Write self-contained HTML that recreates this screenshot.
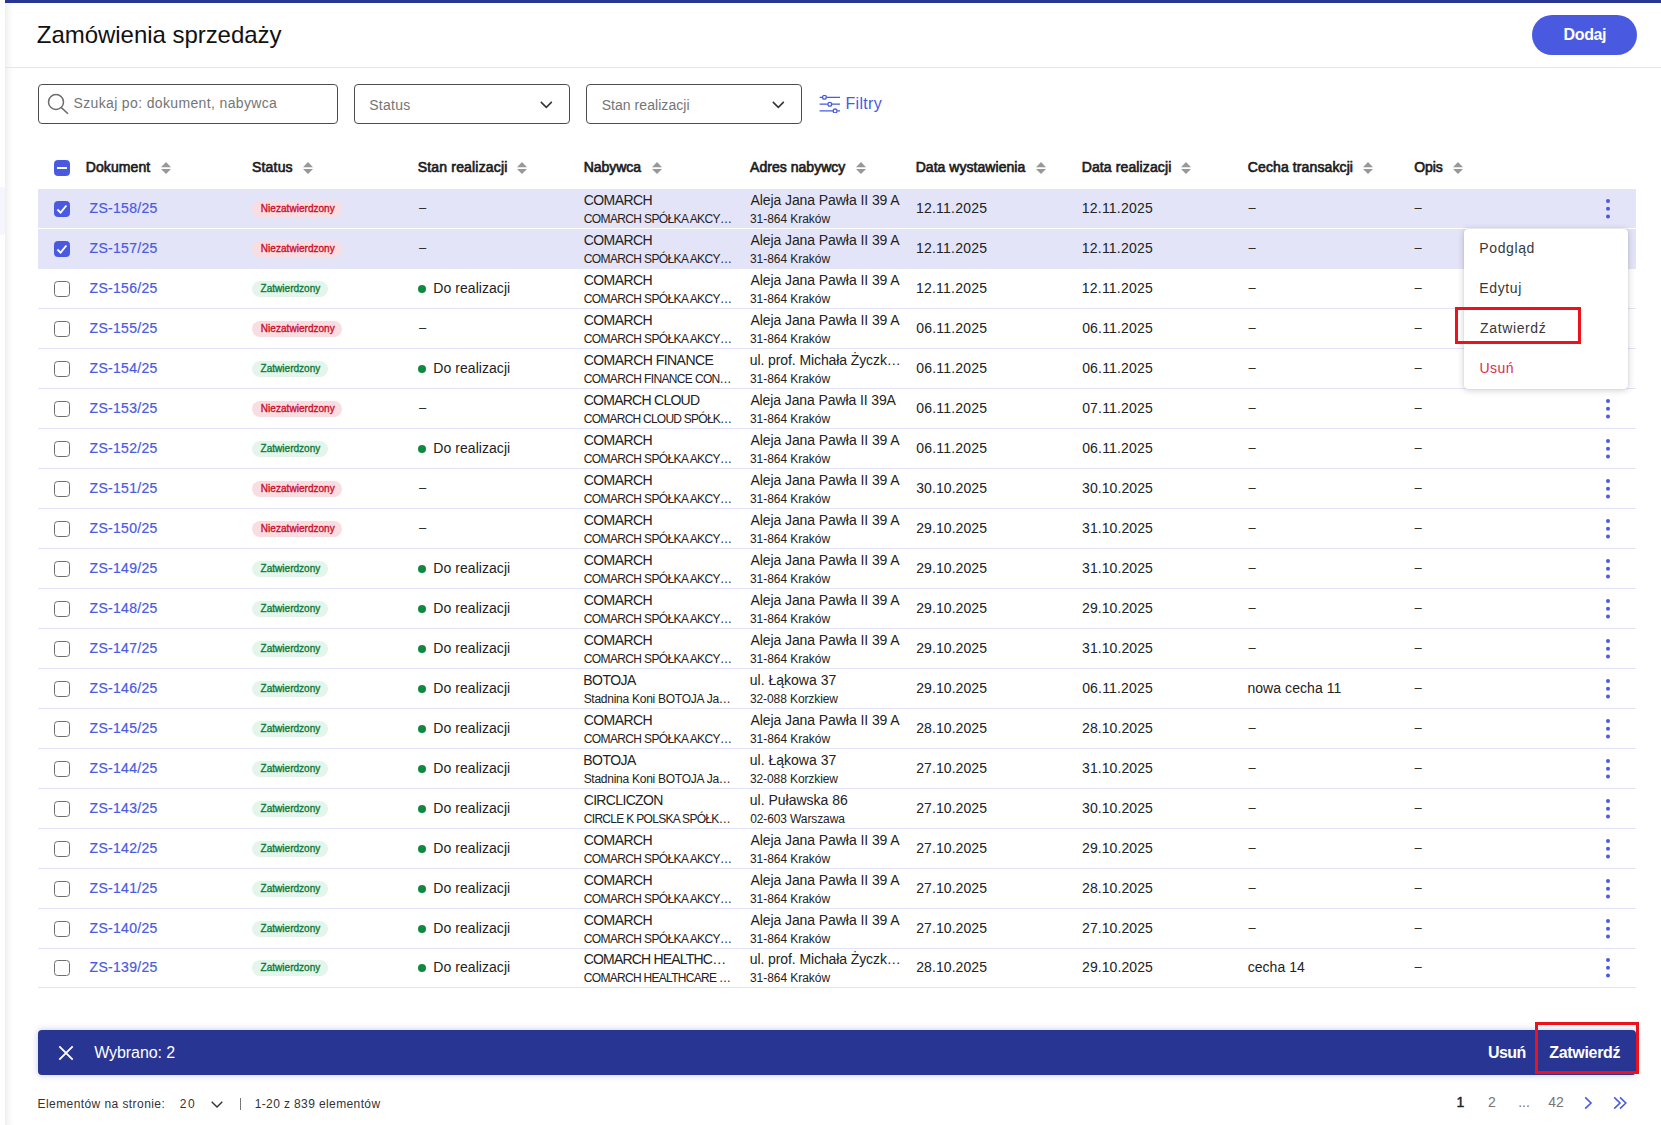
<!DOCTYPE html>
<html lang="pl">
<head>
<meta charset="utf-8">
<title>Zamówienia sprzedaży</title>
<style>
*{box-sizing:border-box;margin:0;padding:0}
html,body{width:1661px;height:1125px;overflow:hidden;background:#fff}
body{position:relative;font-family:"Liberation Sans",sans-serif;color:#222;font-size:14px}
span,a,i,svg{white-space:nowrap}
.edge{position:absolute;left:5px;top:0;width:9px;height:1125px;background:linear-gradient(90deg,#efefef 0,#f8f8f8 40%,#fff 100%)}
.topbar{position:absolute;left:5px;top:0;right:0;height:3px;background:#283593}
.title{position:absolute;top:21px;font-size:24px;line-height:28px;color:#111}
.add{position:absolute;left:1532px;top:15px;width:105px;height:40px;border-radius:20px;background:#4a5ae0;color:#fff;font-weight:bold;font-size:16px}
.add span{position:absolute;top:10px;line-height:20px}
.hline{position:absolute;left:5px;right:0;top:67px;height:1px;background:#e3e3fa}
.search{position:absolute;left:38px;top:84px;width:300px;height:40px;border:1px solid #4d4d4d;border-radius:4px}
.sico{position:absolute;left:7px;top:7px;fill:none;stroke:#6b6b6b;stroke-width:1.5}
.ph{position:absolute;top:9px;line-height:18px;font-size:14px;color:#757575}
.sel{position:absolute;top:84px;width:216px;height:40px;border:1px solid #4d4d4d;border-radius:4px}
.sel1{left:354px}.sel2{left:586px}
.sl{position:absolute;top:11px;line-height:18px;font-size:14px;color:#757575}
.chev{position:absolute;left:185px;top:16px;fill:none;stroke:#333;stroke-width:1.5}
.filt{position:absolute;left:819px;top:94px;height:20px;color:#4a5ae0;font-size:16px}
.filt svg{position:absolute;left:0;top:1px;fill:none;stroke:#4a5ae0;stroke-width:1.3}
.filt span{position:absolute;top:0px;line-height:20px}
.thead{position:absolute;left:38px;top:149px;width:1598px;height:40px}
.th{position:absolute;top:9px;line-height:18px;font-size:14px;color:#1c1c1c;-webkit-text-stroke:.65px #1c1c1c}
.srt{position:absolute;top:12.5px;fill:#989898}
.cb{position:absolute;left:16px;top:12px;width:16px;height:16px;border:1px solid #6e6e6e;border-radius:3.5px;background:#fff}
.thead .cb{top:11px}
.cb.chk,.cb.ind{background:#4a5ae0;border-color:#4a5ae0}
.cb.chk svg{position:absolute;left:-1px;top:-1px;fill:none;stroke:#fff;stroke-width:1.9}
.cb.ind i{position:absolute;left:2px;top:5.5px;width:10px;height:2.5px;background:#fff}
.tbody{position:absolute;left:38px;top:189px;width:1598px}
.tr{position:relative;height:40px;border-bottom:1px solid #e3e3fa}
.tr.on{background:#e4e4f8}
.tr.rs1{border-bottom-color:#fff}
.tr.rs2{border-bottom-color:#e4e4f8}
.tr.last{height:39px}
.tr>*{position:absolute}
.tr.last>*{margin-top:-1px}
.doc{top:10px;line-height:18px;font-size:14px;color:#4a5ae0;-webkit-text-stroke:.2px #4a5ae0}
.bdg{left:214px;top:12px;height:16px;border-radius:8px;font-size:10px;-webkit-text-stroke:.35px}
.bdg span{position:absolute;top:0;line-height:16px}
.bn{width:90px;background:#f9dde1;color:#c8102e}
.bz{width:76px;background:#e4f5eb;color:#0e7a3c}
.one{top:10px;line-height:18px}
.dot{left:380px;top:16px;width:8px;height:8px;border-radius:50%;background:#0e8a3e}
.l1{top:2px;line-height:18px;font-size:14px}
.l2{top:22px;line-height:16px;font-size:12px}
.kb{left:1567px;top:9px;fill:#4a5ae0}
.menu{position:absolute;left:1464px;top:229px;width:164px;height:160px;background:#fff;border-radius:4px;box-shadow:0 1px 7px rgba(0,0,0,.20),0 0 2px rgba(0,0,0,.10)}
.mi{position:relative;height:40px;font-size:14px;color:#383838}
.mi span{position:absolute;top:10px;line-height:18px}
.mi.del{color:#dc2d4b}
.red{position:absolute;border:3px solid #ec111a}
.r1{left:1455px;top:307px;width:126px;height:37px}
.r2{left:1535px;top:1022px;width:104px;height:52px}
.bar{position:absolute;left:38px;top:1030px;width:1598px;height:45px;background:#283593;border-radius:4px;color:#fff;box-shadow:0 0 7px rgba(60,70,200,.30)}
.bar .x{position:absolute;left:20px;top:15px;fill:none;stroke:#fff;stroke-width:1.9}
.bar span{position:absolute;top:13px;line-height:20px;font-size:16px}
.bar .b{font-weight:bold}
.pg{position:absolute;left:0;top:1093px;width:1661px;height:20px;font-size:12px;color:#333}
.pg>*{position:absolute;line-height:20px;top:1px}
.bar2{left:240px;top:5px!important;width:1px;height:12px;background:#777}
.pchev{left:211px;top:8px!important;fill:none;stroke:#333;stroke-width:1.4}
.n{font-size:14px;width:32px;text-align:center;color:#757575;top:-1px!important}
.n1{left:1444.5px;color:#222;-webkit-text-stroke:0.45px #222}.n2{left:1476px}.n3{left:1508px}.n4{left:1540px}
.nx{left:1584px;top:3px!important;fill:none;stroke:#4a5ae0;stroke-width:1.6}
.nxx{left:1613px;top:3px!important;fill:none;stroke:#4a5ae0;stroke-width:1.6}
.dash{top:10px;font-size:13px}
.side{position:absolute;left:0;top:187px;width:4.5px;height:48px;background:#f5f5fd;border-radius:0 3px 3px 0}

</style>
</head>
<body>
<div class="side"></div>
<div class="edge"></div>
<div class="topbar"></div>
<span class="title" style="left:36.87px;letter-spacing:-0.043px">Zamówienia sprzedaży</span>
<div class="add"><span style="left:31.60px;letter-spacing:-0.397px">Dodaj</span></div>
<div class="hline"></div>
<div class="search"><svg class="sico" width="24" height="24" viewBox="0 0 24 24"><circle cx="10" cy="10" r="7.5"/><path d="M15.4 15.6 L22 21.7"/></svg><span class="ph" style="left:34.46px;letter-spacing:0.358px">Szukaj po: dokument, nabywca</span></div>
<div class="sel sel1"><span class="sl" style="left:14.16px;letter-spacing:0.294px">Status</span><svg class="chev" width="14" height="8" viewBox="0 0 14 8"><path d="M0.8 0.9 L6.3 6.4 L11.8 0.9"/></svg></div>
<div class="sel sel2"><span class="sl" style="left:14.66px;letter-spacing:0.054px">Stan realizacji</span><svg class="chev" width="14" height="8" viewBox="0 0 14 8"><path d="M0.8 0.9 L6.3 6.4 L11.8 0.9"/></svg></div>
<div class="filt"><svg width="22" height="18" viewBox="0 0 22 18"><path d="M0.6 2.3 H3.2 M7.6 2.3 H21 M0.6 9.2 H8.6 M13 9.2 H21 M0.6 15.9 H13.9 M18.3 15.9 H21"/><circle cx="5.4" cy="2.3" r="1.9"/><circle cx="10.8" cy="9.2" r="1.9"/><circle cx="16.1" cy="15.9" r="1.9"/></svg><span style="left:26.54px;letter-spacing:0.311px">Filtry</span></div>
<div class="thead">
<span class="cb ind"><i></i></span>
<span class="th" style="left:47.67px;letter-spacing:0.110px">Dokument</span><svg class="srt" width="10" height="12" viewBox="0 0 10 12" style="left:123.10px"><path d="M5 0 L10 5.2 H0 Z"/><path d="M5 12 L10 6.9 H0 Z"/></svg>
<span class="th" style="left:213.96px;letter-spacing:0.194px">Status</span><svg class="srt" width="10" height="12" viewBox="0 0 10 12" style="left:265.10px"><path d="M5 0 L10 5.2 H0 Z"/><path d="M5 12 L10 6.9 H0 Z"/></svg>
<span class="th" style="left:379.71px;letter-spacing:0.179px">Stan realizacji</span><svg class="srt" width="10" height="12" viewBox="0 0 10 12" style="left:479.35px"><path d="M5 0 L10 5.2 H0 Z"/><path d="M5 12 L10 6.9 H0 Z"/></svg>
<span class="th" style="left:545.67px;letter-spacing:-0.039px">Nabywca</span><svg class="srt" width="10" height="12" viewBox="0 0 10 12" style="left:613.85px"><path d="M5 0 L10 5.2 H0 Z"/><path d="M5 12 L10 6.9 H0 Z"/></svg>
<span class="th" style="left:712.08px;letter-spacing:0.026px">Adres nabywcy</span><svg class="srt" width="10" height="12" viewBox="0 0 10 12" style="left:818.10px"><path d="M5 0 L10 5.2 H0 Z"/><path d="M5 12 L10 6.9 H0 Z"/></svg>
<span class="th" style="left:877.67px;letter-spacing:0.045px">Data wystawienia</span><svg class="srt" width="10" height="12" viewBox="0 0 10 12" style="left:998.35px"><path d="M5 0 L10 5.2 H0 Z"/><path d="M5 12 L10 6.9 H0 Z"/></svg>
<span class="th" style="left:1043.67px;letter-spacing:0.123px">Data realizacji</span><svg class="srt" width="10" height="12" viewBox="0 0 10 12" style="left:1143.35px"><path d="M5 0 L10 5.2 H0 Z"/><path d="M5 12 L10 6.9 H0 Z"/></svg>
<span class="th" style="left:1209.84px;letter-spacing:0.110px">Cecha transakcji</span><svg class="srt" width="10" height="12" viewBox="0 0 10 12" style="left:1325.10px"><path d="M5 0 L10 5.2 H0 Z"/><path d="M5 12 L10 6.9 H0 Z"/></svg>
<span class="th" style="left:1376.15px;letter-spacing:-0.074px">Opis</span><svg class="srt" width="10" height="12" viewBox="0 0 10 12" style="left:1415.10px"><path d="M5 0 L10 5.2 H0 Z"/><path d="M5 12 L10 6.9 H0 Z"/></svg>
</div>
<div class="tbody">
<div class="tr on rs1"><span class="cb chk"><svg width="16" height="16" viewBox="0 0 16 16"><path d="M3.4 8.5 L6.6 11.6 L12.4 4.5"/></svg></span><a class="doc" style="left:51.60px;letter-spacing:0.291px">ZS-158/25</a><span class="bdg bn"><span style="left:8.84px;letter-spacing:0.037px">Niezatwierdzony</span></span><span class="one dash" style="left:381px">–</span><span class="l1" style="left:545.69px;letter-spacing:-0.571px">COMARCH</span><span class="l2" style="left:545.79px;letter-spacing:-0.627px">COMARCH SPÓŁKA AKCY…</span><span class="l1" style="left:712.38px;letter-spacing:-0.072px">Aleja Jana Pawła II 39 A</span><span class="l2" style="left:711.96px;letter-spacing:-0.047px">31-864 Kraków</span><span class="one" style="left:878px;letter-spacing:0.214px">12.11.2025</span><span class="one" style="left:1043.80px;letter-spacing:0.214px">12.11.2025</span><span class="one dash" style="left:1210.5px">–</span><span class="one dash" style="left:1376.6px">–</span><svg class="kb" width="6" height="22" viewBox="0 0 6 22"><circle cx="3" cy="3" r="2"/><circle cx="3" cy="10.8" r="2"/><circle cx="3" cy="18.6" r="2"/></svg></div>
<div class="tr on rs2"><span class="cb chk"><svg width="16" height="16" viewBox="0 0 16 16"><path d="M3.4 8.5 L6.6 11.6 L12.4 4.5"/></svg></span><a class="doc" style="left:51.60px;letter-spacing:0.291px">ZS-157/25</a><span class="bdg bn"><span style="left:8.84px;letter-spacing:0.037px">Niezatwierdzony</span></span><span class="one dash" style="left:381px">–</span><span class="l1" style="left:545.69px;letter-spacing:-0.571px">COMARCH</span><span class="l2" style="left:545.79px;letter-spacing:-0.627px">COMARCH SPÓŁKA AKCY…</span><span class="l1" style="left:712.38px;letter-spacing:-0.072px">Aleja Jana Pawła II 39 A</span><span class="l2" style="left:711.96px;letter-spacing:-0.047px">31-864 Kraków</span><span class="one" style="left:878px;letter-spacing:0.214px">12.11.2025</span><span class="one" style="left:1043.80px;letter-spacing:0.214px">12.11.2025</span><span class="one dash" style="left:1210.5px">–</span><span class="one dash" style="left:1376.6px">–</span></div>
<div class="tr"><span class="cb"></span><a class="doc" style="left:51.60px;letter-spacing:0.291px">ZS-156/25</a><span class="bdg bz"><span style="left:8.60px;letter-spacing:0.014px">Zatwierdzony</span></span><i class="dot"></i><span class="one" style="left:395.37px;letter-spacing:0.046px">Do realizacji</span><span class="l1" style="left:545.69px;letter-spacing:-0.571px">COMARCH</span><span class="l2" style="left:545.79px;letter-spacing:-0.627px">COMARCH SPÓŁKA AKCY…</span><span class="l1" style="left:712.38px;letter-spacing:-0.072px">Aleja Jana Pawła II 39 A</span><span class="l2" style="left:711.96px;letter-spacing:-0.047px">31-864 Kraków</span><span class="one" style="left:878px;letter-spacing:0.214px">12.11.2025</span><span class="one" style="left:1043.80px;letter-spacing:0.214px">12.11.2025</span><span class="one dash" style="left:1210.5px">–</span><span class="one dash" style="left:1376.6px">–</span></div>
<div class="tr"><span class="cb"></span><a class="doc" style="left:51.60px;letter-spacing:0.291px">ZS-155/25</a><span class="bdg bn"><span style="left:8.84px;letter-spacing:0.037px">Niezatwierdzony</span></span><span class="one dash" style="left:381px">–</span><span class="l1" style="left:545.69px;letter-spacing:-0.571px">COMARCH</span><span class="l2" style="left:545.79px;letter-spacing:-0.627px">COMARCH SPÓŁKA AKCY…</span><span class="l1" style="left:712.38px;letter-spacing:-0.072px">Aleja Jana Pawła II 39 A</span><span class="l2" style="left:711.96px;letter-spacing:-0.047px">31-864 Kraków</span><span class="one" style="left:878.36px;letter-spacing:0.174px">06.11.2025</span><span class="one" style="left:1044.16px;letter-spacing:0.174px">06.11.2025</span><span class="one dash" style="left:1210.5px">–</span><span class="one dash" style="left:1376.6px">–</span></div>
<div class="tr"><span class="cb"></span><a class="doc" style="left:51.60px;letter-spacing:0.291px">ZS-154/25</a><span class="bdg bz"><span style="left:8.60px;letter-spacing:0.014px">Zatwierdzony</span></span><i class="dot"></i><span class="one" style="left:395.37px;letter-spacing:0.046px">Do realizacji</span><span class="l1" style="left:545.69px;letter-spacing:-0.534px">COMARCH FINANCE</span><span class="l2" style="left:545.79px;letter-spacing:-0.640px">COMARCH FINANCE CON…</span><span class="l1" style="left:711.79px;letter-spacing:-0.096px">ul. prof. Michała Życzk…</span><span class="l2" style="left:711.96px;letter-spacing:-0.047px">31-864 Kraków</span><span class="one" style="left:878.36px;letter-spacing:0.174px">06.11.2025</span><span class="one" style="left:1044.16px;letter-spacing:0.174px">06.11.2025</span><span class="one dash" style="left:1210.5px">–</span><span class="one dash" style="left:1376.6px">–</span></div>
<div class="tr"><span class="cb"></span><a class="doc" style="left:51.60px;letter-spacing:0.291px">ZS-153/25</a><span class="bdg bn"><span style="left:8.84px;letter-spacing:0.037px">Niezatwierdzony</span></span><span class="one dash" style="left:381px">–</span><span class="l1" style="left:545.69px;letter-spacing:-0.737px">COMARCH CLOUD</span><span class="l2" style="left:545.79px;letter-spacing:-0.760px">COMARCH CLOUD SPÓŁK…</span><span class="l1" style="left:712.38px;letter-spacing:-0.104px">Aleja Jana Pawła II 39A</span><span class="l2" style="left:711.96px;letter-spacing:-0.047px">31-864 Kraków</span><span class="one" style="left:878.36px;letter-spacing:0.174px">06.11.2025</span><span class="one" style="left:1044.16px;letter-spacing:0.174px">07.11.2025</span><span class="one dash" style="left:1210.5px">–</span><span class="one dash" style="left:1376.6px">–</span><svg class="kb" width="6" height="22" viewBox="0 0 6 22"><circle cx="3" cy="3" r="2"/><circle cx="3" cy="10.8" r="2"/><circle cx="3" cy="18.6" r="2"/></svg></div>
<div class="tr"><span class="cb"></span><a class="doc" style="left:51.60px;letter-spacing:0.291px">ZS-152/25</a><span class="bdg bz"><span style="left:8.60px;letter-spacing:0.014px">Zatwierdzony</span></span><i class="dot"></i><span class="one" style="left:395.37px;letter-spacing:0.046px">Do realizacji</span><span class="l1" style="left:545.69px;letter-spacing:-0.571px">COMARCH</span><span class="l2" style="left:545.79px;letter-spacing:-0.627px">COMARCH SPÓŁKA AKCY…</span><span class="l1" style="left:712.38px;letter-spacing:-0.072px">Aleja Jana Pawła II 39 A</span><span class="l2" style="left:711.96px;letter-spacing:-0.047px">31-864 Kraków</span><span class="one" style="left:878.36px;letter-spacing:0.174px">06.11.2025</span><span class="one" style="left:1044.16px;letter-spacing:0.174px">06.11.2025</span><span class="one dash" style="left:1210.5px">–</span><span class="one dash" style="left:1376.6px">–</span><svg class="kb" width="6" height="22" viewBox="0 0 6 22"><circle cx="3" cy="3" r="2"/><circle cx="3" cy="10.8" r="2"/><circle cx="3" cy="18.6" r="2"/></svg></div>
<div class="tr"><span class="cb"></span><a class="doc" style="left:51.60px;letter-spacing:0.291px">ZS-151/25</a><span class="bdg bn"><span style="left:8.84px;letter-spacing:0.037px">Niezatwierdzony</span></span><span class="one dash" style="left:381px">–</span><span class="l1" style="left:545.69px;letter-spacing:-0.571px">COMARCH</span><span class="l2" style="left:545.79px;letter-spacing:-0.627px">COMARCH SPÓŁKA AKCY…</span><span class="l1" style="left:712.38px;letter-spacing:-0.072px">Aleja Jana Pawła II 39 A</span><span class="l2" style="left:711.96px;letter-spacing:-0.047px">31-864 Kraków</span><span class="one" style="left:878.22px;letter-spacing:0.078px">30.10.2025</span><span class="one" style="left:1044.02px;letter-spacing:0.078px">30.10.2025</span><span class="one dash" style="left:1210.5px">–</span><span class="one dash" style="left:1376.6px">–</span><svg class="kb" width="6" height="22" viewBox="0 0 6 22"><circle cx="3" cy="3" r="2"/><circle cx="3" cy="10.8" r="2"/><circle cx="3" cy="18.6" r="2"/></svg></div>
<div class="tr"><span class="cb"></span><a class="doc" style="left:51.60px;letter-spacing:0.291px">ZS-150/25</a><span class="bdg bn"><span style="left:8.84px;letter-spacing:0.037px">Niezatwierdzony</span></span><span class="one dash" style="left:381px">–</span><span class="l1" style="left:545.69px;letter-spacing:-0.571px">COMARCH</span><span class="l2" style="left:545.79px;letter-spacing:-0.627px">COMARCH SPÓŁKA AKCY…</span><span class="l1" style="left:712.38px;letter-spacing:-0.072px">Aleja Jana Pawła II 39 A</span><span class="l2" style="left:711.96px;letter-spacing:-0.047px">31-864 Kraków</span><span class="one" style="left:878.23px;letter-spacing:0.077px">29.10.2025</span><span class="one" style="left:1044.02px;letter-spacing:0.078px">31.10.2025</span><span class="one dash" style="left:1210.5px">–</span><span class="one dash" style="left:1376.6px">–</span><svg class="kb" width="6" height="22" viewBox="0 0 6 22"><circle cx="3" cy="3" r="2"/><circle cx="3" cy="10.8" r="2"/><circle cx="3" cy="18.6" r="2"/></svg></div>
<div class="tr"><span class="cb"></span><a class="doc" style="left:51.60px;letter-spacing:0.291px">ZS-149/25</a><span class="bdg bz"><span style="left:8.60px;letter-spacing:0.014px">Zatwierdzony</span></span><i class="dot"></i><span class="one" style="left:395.37px;letter-spacing:0.046px">Do realizacji</span><span class="l1" style="left:545.69px;letter-spacing:-0.571px">COMARCH</span><span class="l2" style="left:545.79px;letter-spacing:-0.627px">COMARCH SPÓŁKA AKCY…</span><span class="l1" style="left:712.38px;letter-spacing:-0.072px">Aleja Jana Pawła II 39 A</span><span class="l2" style="left:711.96px;letter-spacing:-0.047px">31-864 Kraków</span><span class="one" style="left:878.23px;letter-spacing:0.077px">29.10.2025</span><span class="one" style="left:1044.02px;letter-spacing:0.078px">31.10.2025</span><span class="one dash" style="left:1210.5px">–</span><span class="one dash" style="left:1376.6px">–</span><svg class="kb" width="6" height="22" viewBox="0 0 6 22"><circle cx="3" cy="3" r="2"/><circle cx="3" cy="10.8" r="2"/><circle cx="3" cy="18.6" r="2"/></svg></div>
<div class="tr"><span class="cb"></span><a class="doc" style="left:51.60px;letter-spacing:0.291px">ZS-148/25</a><span class="bdg bz"><span style="left:8.60px;letter-spacing:0.014px">Zatwierdzony</span></span><i class="dot"></i><span class="one" style="left:395.37px;letter-spacing:0.046px">Do realizacji</span><span class="l1" style="left:545.69px;letter-spacing:-0.571px">COMARCH</span><span class="l2" style="left:545.79px;letter-spacing:-0.627px">COMARCH SPÓŁKA AKCY…</span><span class="l1" style="left:712.38px;letter-spacing:-0.072px">Aleja Jana Pawła II 39 A</span><span class="l2" style="left:711.96px;letter-spacing:-0.047px">31-864 Kraków</span><span class="one" style="left:878.23px;letter-spacing:0.077px">29.10.2025</span><span class="one" style="left:1044.03px;letter-spacing:0.077px">29.10.2025</span><span class="one dash" style="left:1210.5px">–</span><span class="one dash" style="left:1376.6px">–</span><svg class="kb" width="6" height="22" viewBox="0 0 6 22"><circle cx="3" cy="3" r="2"/><circle cx="3" cy="10.8" r="2"/><circle cx="3" cy="18.6" r="2"/></svg></div>
<div class="tr"><span class="cb"></span><a class="doc" style="left:51.60px;letter-spacing:0.291px">ZS-147/25</a><span class="bdg bz"><span style="left:8.60px;letter-spacing:0.014px">Zatwierdzony</span></span><i class="dot"></i><span class="one" style="left:395.37px;letter-spacing:0.046px">Do realizacji</span><span class="l1" style="left:545.69px;letter-spacing:-0.571px">COMARCH</span><span class="l2" style="left:545.79px;letter-spacing:-0.627px">COMARCH SPÓŁKA AKCY…</span><span class="l1" style="left:712.38px;letter-spacing:-0.072px">Aleja Jana Pawła II 39 A</span><span class="l2" style="left:711.96px;letter-spacing:-0.047px">31-864 Kraków</span><span class="one" style="left:878.23px;letter-spacing:0.077px">29.10.2025</span><span class="one" style="left:1044.02px;letter-spacing:0.078px">31.10.2025</span><span class="one dash" style="left:1210.5px">–</span><span class="one dash" style="left:1376.6px">–</span><svg class="kb" width="6" height="22" viewBox="0 0 6 22"><circle cx="3" cy="3" r="2"/><circle cx="3" cy="10.8" r="2"/><circle cx="3" cy="18.6" r="2"/></svg></div>
<div class="tr"><span class="cb"></span><a class="doc" style="left:51.60px;letter-spacing:0.291px">ZS-146/25</a><span class="bdg bz"><span style="left:8.60px;letter-spacing:0.014px">Zatwierdzony</span></span><i class="dot"></i><span class="one" style="left:395.37px;letter-spacing:0.046px">Do realizacji</span><span class="l1" style="left:545.27px;letter-spacing:-0.527px">BOTOJA</span><span class="l2" style="left:545.63px;letter-spacing:-0.261px">Stadnina Koni BOTOJA Ja…</span><span class="l1" style="left:711.79px;letter-spacing:0.006px">ul. Łąkowa 37</span><span class="l2" style="left:711.96px;letter-spacing:-0.096px">32-088 Korzkiew</span><span class="one" style="left:878.23px;letter-spacing:0.077px">29.10.2025</span><span class="one" style="left:1044.16px;letter-spacing:0.174px">06.11.2025</span><span class="one" style="left:1209.39px;letter-spacing:0.070px">nowa cecha 11</span><span class="one dash" style="left:1376.6px">–</span><svg class="kb" width="6" height="22" viewBox="0 0 6 22"><circle cx="3" cy="3" r="2"/><circle cx="3" cy="10.8" r="2"/><circle cx="3" cy="18.6" r="2"/></svg></div>
<div class="tr"><span class="cb"></span><a class="doc" style="left:51.60px;letter-spacing:0.291px">ZS-145/25</a><span class="bdg bz"><span style="left:8.60px;letter-spacing:0.014px">Zatwierdzony</span></span><i class="dot"></i><span class="one" style="left:395.37px;letter-spacing:0.046px">Do realizacji</span><span class="l1" style="left:545.69px;letter-spacing:-0.571px">COMARCH</span><span class="l2" style="left:545.79px;letter-spacing:-0.627px">COMARCH SPÓŁKA AKCY…</span><span class="l1" style="left:712.38px;letter-spacing:-0.072px">Aleja Jana Pawła II 39 A</span><span class="l2" style="left:711.96px;letter-spacing:-0.047px">31-864 Kraków</span><span class="one" style="left:878.23px;letter-spacing:0.077px">28.10.2025</span><span class="one" style="left:1044.03px;letter-spacing:0.077px">28.10.2025</span><span class="one dash" style="left:1210.5px">–</span><span class="one dash" style="left:1376.6px">–</span><svg class="kb" width="6" height="22" viewBox="0 0 6 22"><circle cx="3" cy="3" r="2"/><circle cx="3" cy="10.8" r="2"/><circle cx="3" cy="18.6" r="2"/></svg></div>
<div class="tr"><span class="cb"></span><a class="doc" style="left:51.60px;letter-spacing:0.291px">ZS-144/25</a><span class="bdg bz"><span style="left:8.60px;letter-spacing:0.014px">Zatwierdzony</span></span><i class="dot"></i><span class="one" style="left:395.37px;letter-spacing:0.046px">Do realizacji</span><span class="l1" style="left:545.27px;letter-spacing:-0.527px">BOTOJA</span><span class="l2" style="left:545.63px;letter-spacing:-0.261px">Stadnina Koni BOTOJA Ja…</span><span class="l1" style="left:711.79px;letter-spacing:0.006px">ul. Łąkowa 37</span><span class="l2" style="left:711.96px;letter-spacing:-0.096px">32-088 Korzkiew</span><span class="one" style="left:878.23px;letter-spacing:0.077px">27.10.2025</span><span class="one" style="left:1044.02px;letter-spacing:0.078px">31.10.2025</span><span class="one dash" style="left:1210.5px">–</span><span class="one dash" style="left:1376.6px">–</span><svg class="kb" width="6" height="22" viewBox="0 0 6 22"><circle cx="3" cy="3" r="2"/><circle cx="3" cy="10.8" r="2"/><circle cx="3" cy="18.6" r="2"/></svg></div>
<div class="tr"><span class="cb"></span><a class="doc" style="left:51.60px;letter-spacing:0.291px">ZS-143/25</a><span class="bdg bz"><span style="left:8.60px;letter-spacing:0.014px">Zatwierdzony</span></span><i class="dot"></i><span class="one" style="left:395.37px;letter-spacing:0.046px">Do realizacji</span><span class="l1" style="left:545.69px;letter-spacing:-0.657px">CIRCLICZON</span><span class="l2" style="left:545.79px;letter-spacing:-0.692px">CIRCLE K POLSKA SPÓŁK…</span><span class="l1" style="left:711.79px">ul. Puławska 86</span><span class="l2" style="left:712.14px;letter-spacing:-0.107px">02-603 Warszawa</span><span class="one" style="left:878.23px;letter-spacing:0.077px">27.10.2025</span><span class="one" style="left:1044.02px;letter-spacing:0.078px">30.10.2025</span><span class="one dash" style="left:1210.5px">–</span><span class="one dash" style="left:1376.6px">–</span><svg class="kb" width="6" height="22" viewBox="0 0 6 22"><circle cx="3" cy="3" r="2"/><circle cx="3" cy="10.8" r="2"/><circle cx="3" cy="18.6" r="2"/></svg></div>
<div class="tr"><span class="cb"></span><a class="doc" style="left:51.60px;letter-spacing:0.291px">ZS-142/25</a><span class="bdg bz"><span style="left:8.60px;letter-spacing:0.014px">Zatwierdzony</span></span><i class="dot"></i><span class="one" style="left:395.37px;letter-spacing:0.046px">Do realizacji</span><span class="l1" style="left:545.69px;letter-spacing:-0.571px">COMARCH</span><span class="l2" style="left:545.79px;letter-spacing:-0.627px">COMARCH SPÓŁKA AKCY…</span><span class="l1" style="left:712.38px;letter-spacing:-0.072px">Aleja Jana Pawła II 39 A</span><span class="l2" style="left:711.96px;letter-spacing:-0.047px">31-864 Kraków</span><span class="one" style="left:878.23px;letter-spacing:0.077px">27.10.2025</span><span class="one" style="left:1044.03px;letter-spacing:0.077px">29.10.2025</span><span class="one dash" style="left:1210.5px">–</span><span class="one dash" style="left:1376.6px">–</span><svg class="kb" width="6" height="22" viewBox="0 0 6 22"><circle cx="3" cy="3" r="2"/><circle cx="3" cy="10.8" r="2"/><circle cx="3" cy="18.6" r="2"/></svg></div>
<div class="tr"><span class="cb"></span><a class="doc" style="left:51.60px;letter-spacing:0.291px">ZS-141/25</a><span class="bdg bz"><span style="left:8.60px;letter-spacing:0.014px">Zatwierdzony</span></span><i class="dot"></i><span class="one" style="left:395.37px;letter-spacing:0.046px">Do realizacji</span><span class="l1" style="left:545.69px;letter-spacing:-0.571px">COMARCH</span><span class="l2" style="left:545.79px;letter-spacing:-0.627px">COMARCH SPÓŁKA AKCY…</span><span class="l1" style="left:712.38px;letter-spacing:-0.072px">Aleja Jana Pawła II 39 A</span><span class="l2" style="left:711.96px;letter-spacing:-0.047px">31-864 Kraków</span><span class="one" style="left:878.23px;letter-spacing:0.077px">27.10.2025</span><span class="one" style="left:1044.03px;letter-spacing:0.077px">28.10.2025</span><span class="one dash" style="left:1210.5px">–</span><span class="one dash" style="left:1376.6px">–</span><svg class="kb" width="6" height="22" viewBox="0 0 6 22"><circle cx="3" cy="3" r="2"/><circle cx="3" cy="10.8" r="2"/><circle cx="3" cy="18.6" r="2"/></svg></div>
<div class="tr"><span class="cb"></span><a class="doc" style="left:51.60px;letter-spacing:0.291px">ZS-140/25</a><span class="bdg bz"><span style="left:8.60px;letter-spacing:0.014px">Zatwierdzony</span></span><i class="dot"></i><span class="one" style="left:395.37px;letter-spacing:0.046px">Do realizacji</span><span class="l1" style="left:545.69px;letter-spacing:-0.571px">COMARCH</span><span class="l2" style="left:545.79px;letter-spacing:-0.627px">COMARCH SPÓŁKA AKCY…</span><span class="l1" style="left:712.38px;letter-spacing:-0.072px">Aleja Jana Pawła II 39 A</span><span class="l2" style="left:711.96px;letter-spacing:-0.047px">31-864 Kraków</span><span class="one" style="left:878.23px;letter-spacing:0.077px">27.10.2025</span><span class="one" style="left:1044.03px;letter-spacing:0.077px">27.10.2025</span><span class="one dash" style="left:1210.5px">–</span><span class="one dash" style="left:1376.6px">–</span><svg class="kb" width="6" height="22" viewBox="0 0 6 22"><circle cx="3" cy="3" r="2"/><circle cx="3" cy="10.8" r="2"/><circle cx="3" cy="18.6" r="2"/></svg></div>
<div class="tr last"><span class="cb"></span><a class="doc" style="left:51.60px;letter-spacing:0.291px">ZS-139/25</a><span class="bdg bz"><span style="left:8.60px;letter-spacing:0.014px">Zatwierdzony</span></span><i class="dot"></i><span class="one" style="left:395.37px;letter-spacing:0.046px">Do realizacji</span><span class="l1" style="left:545.69px;letter-spacing:-0.804px">COMARCH HEALTHC…</span><span class="l2" style="left:545.79px;letter-spacing:-0.699px">COMARCH HEALTHCARE …</span><span class="l1" style="left:711.79px;letter-spacing:-0.096px">ul. prof. Michała Życzk…</span><span class="l2" style="left:711.96px;letter-spacing:-0.047px">31-864 Kraków</span><span class="one" style="left:878.23px;letter-spacing:0.077px">28.10.2025</span><span class="one" style="left:1044.03px;letter-spacing:0.077px">29.10.2025</span><span class="one" style="left:1209.64px;letter-spacing:0.049px">cecha 14</span><span class="one dash" style="left:1376.6px">–</span><svg class="kb" width="6" height="22" viewBox="0 0 6 22"><circle cx="3" cy="3" r="2"/><circle cx="3" cy="10.8" r="2"/><circle cx="3" cy="18.6" r="2"/></svg></div>
</div>
<div class="menu"><div class="mi"><span style="left:15.37px;letter-spacing:0.604px">Podgląd</span></div><div class="mi"><span style="left:15.37px;letter-spacing:0.594px">Edytuj</span></div><div class="mi"><span style="left:16.10px;letter-spacing:0.622px">Zatwierdź</span></div><div class="mi del"><span style="left:15.60px;letter-spacing:0.387px">Usuń</span></div></div>
<div class="red r1"></div>
<div class="bar"><svg class="x" width="16" height="16" viewBox="0 0 16 16"><path d="M1.3 1.3 L14.7 14.7 M14.7 1.3 L1.3 14.7"/></svg><span style="left:56.22px;letter-spacing:-0.082px">Wybrano: 2</span><span class="b" style="left:1450.04px;letter-spacing:-0.582px">Usuń</span><span class="b" style="left:1511.17px;letter-spacing:-0.301px">Zatwierdź</span></div>
<div class="red r2"></div>
<div class="pg"><span style="left:37.53px;letter-spacing:0.426px">Elementów na stronie:</span><span style="left:179.80px;letter-spacing:1.436px">20</span><svg class="pchev" width="14" height="8" viewBox="0 0 14 8"><path d="M0.7 0.8 L6 6.1 L11.3 0.8"/></svg><span class="bar2"></span><span style="left:254.67px;letter-spacing:0.388px">1-20 z 839 elementów</span><span class="n n1">1</span><span class="n n2">2</span><span class="n n3">...</span><span class="n n4">42</span><svg class="nx" width="9" height="14" viewBox="0 0 9 14"><path d="M1.2 1.4 L7 7 L1.2 12.6"/></svg><svg class="nxx" width="15" height="14" viewBox="0 0 15 14"><path d="M1.2 1.4 L7 7 L1.2 12.6 M7 1.4 L12.8 7 L7 12.6"/></svg></div>
</body>
</html>
